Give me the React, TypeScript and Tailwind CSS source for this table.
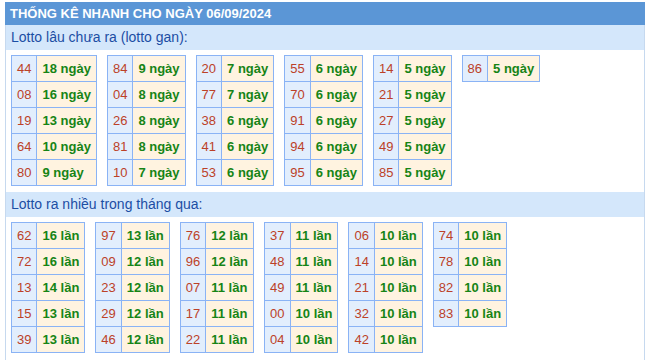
import React from "react";

type Row = [string, string];

const gan: Row[][] = [
  [["44", "18"], ["08", "16"], ["19", "13"], ["64", "10"], ["80", "9"]],
  [["84", "9"], ["04", "8"], ["26", "8"], ["81", "8"], ["10", "7"]],
  [["20", "7"], ["77", "7"], ["38", "6"], ["41", "6"], ["53", "6"]],
  [["55", "6"], ["70", "6"], ["91", "6"], ["94", "6"], ["95", "6"]],
  [["14", "5"], ["21", "5"], ["27", "5"], ["49", "5"], ["85", "5"]],
  [["86", "5"]],
];

const nhieu: Row[][] = [
  [["62", "16"], ["72", "16"], ["13", "14"], ["15", "13"], ["39", "13"]],
  [["97", "13"], ["09", "12"], ["23", "12"], ["29", "12"], ["46", "12"]],
  [["76", "12"], ["96", "12"], ["07", "11"], ["17", "11"], ["22", "11"]],
  [["37", "11"], ["48", "11"], ["49", "11"], ["00", "10"], ["04", "10"]],
  [["06", "10"], ["14", "10"], ["21", "10"], ["32", "10"], ["42", "10"]],
  [["74", "10"], ["78", "10"], ["82", "10"], ["83", "10"]],
];

function StatTable({ rows, unit }: { rows: Row[]; unit: string }) {
  return (
    <table className="border-collapse border border-[#8ab3f5]">
      <tbody>
        {rows.map(([n, c], i) => (
          <tr key={i}>
            <td className="border border-[#8ab3f5] bg-[#e2eefd] px-[5px] py-[4px] text-center text-[13px] leading-[17px] text-[#bc4128]">
              {n}
            </td>
            <td className="border border-[#8ab3f5] bg-[#fff3e0] px-[5px] py-[4px] text-[13px] leading-[17px] font-bold text-[#168416] whitespace-nowrap">
              {c} {unit}
            </td>
          </tr>
        ))}
      </tbody>
    </table>
  );
}

function Section({ title, data, unit }: { title: string; data: Row[][]; unit: string }) {
  return (
    <div>
      <div className="h-[25px] bg-[#d4e7fb] px-[5px] text-[14px] leading-[25px] text-[#1c4ea4]">
        {title}
      </div>
      <div className="flex items-start gap-[10px] px-[5px] pt-[5px] pb-[6px]">
        {data.map((rows, i) => (
          <StatTable key={i} rows={rows} unit={unit} />
        ))}
      </div>
    </div>
  );
}

export default function App() {
  return (
    <div className="min-h-[360px] bg-white pt-[2px] font-['Liberation_Sans',Arial,sans-serif]">
      <div className="ml-[5px] w-[640px]">
        <div className="h-[23px] bg-[#5b96d6] px-[5px] text-[13px] font-bold leading-[23px] text-white">
          THỐNG KÊ NHANH CHO NGÀY 06/09/2024
        </div>
        <div className="border-x border-[#c6d9ef] pb-[6px]">
          <Section title="Lotto lâu chưa ra (lotto gan):" data={gan} unit="ngày" />
          <Section title="Lotto ra nhiều trong tháng qua:" data={nhieu} unit="lần" />
        </div>
      </div>
    </div>
  );
}
